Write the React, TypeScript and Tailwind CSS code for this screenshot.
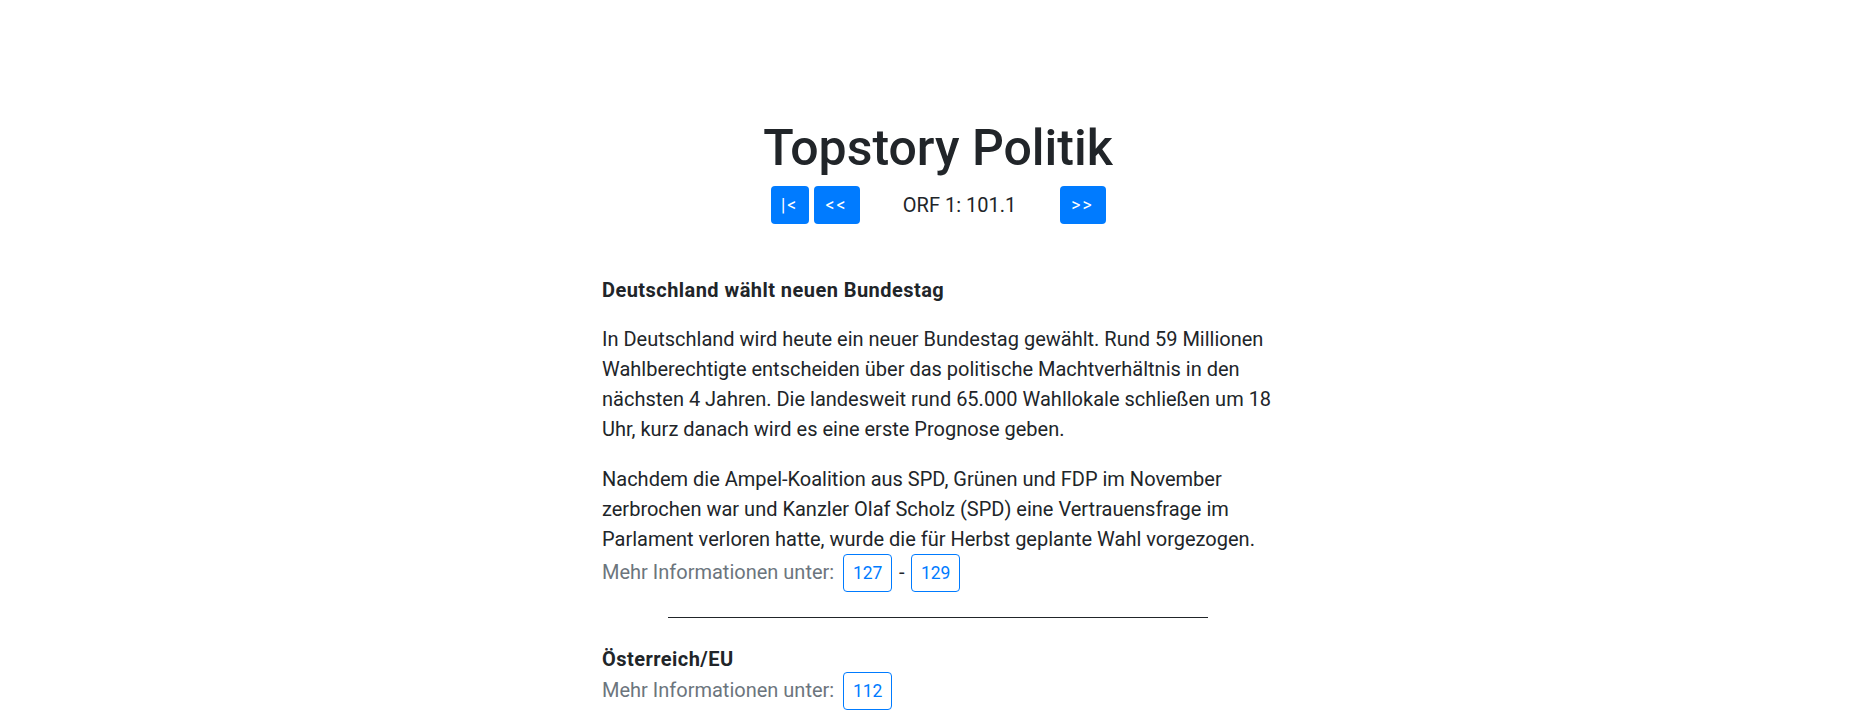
import React from 'react';

const font = { fontFamily: 'Roboto, "Liberation Sans", sans-serif' };

const NavButton: React.FC<{ label: string; width: string }> = ({ label, width }) => (
  <button
    type="button"
    className={`${width} h-[38px] rounded-[4px] bg-[#007bff] text-[17.5px] leading-[26px] tracking-[2px] text-white flex items-center justify-center`}
  >
    {label}
  </button>
);

const PageLink: React.FC<{ page: number }> = ({ page }) => (
  <a
    href="#"
    className="w-[49px] h-[38px] shrink-0 rounded-[4px] border border-[#007bff] text-[17.5px] leading-[26px] text-[#007bff] flex items-center justify-center"
  >
    {page}
  </a>
);

const MoreInfo: React.FC<{ pages: number[]; className?: string }> = ({ pages, className = '' }) => (
  <div className={`flex items-baseline ${className}`}>
    <span className="text-[#6c757d] mr-[9px]">Mehr Informationen unter:</span>
    <PageLink page={pages[0]} />
    {pages.length > 1 && (
      <>
        <span className="w-[19px] text-center">-</span>
        <PageLink page={pages[1]} />
      </>
    )}
  </div>
);

export default function App() {
  return (
    <div className="h-screen overflow-hidden bg-white text-[#212529]" style={font}>
      <main className="w-[672px] mx-auto pt-[118px] text-[20px] leading-[30px]">
        <h1 className="text-center text-[50px] leading-[60px] font-medium">Topstory Politik</h1>

        {/* Teletext page navigation */}
        <div className="mt-[8px] flex justify-center gap-[5px]">
          <NavButton label="|<" width="w-[38px]" />
          <NavButton label="<<" width="w-[46px]" />
          <span className="w-[190px] flex items-center justify-center">ORF 1: 101.1</span>
          <NavButton label=">>" width="w-[46px]" />
        </div>

        <article className="mt-[51px]">
          <h2 className="font-bold tracking-[0.45px]">Deutschland wählt neuen Bundestag</h2>
          <p className="mt-[19px]">
            In Deutschland wird heute ein neuer Bundestag gewählt. Rund 59 Millionen Wahlberechtigte entscheiden
            über das politische Machtverhältnis in den nächsten 4 Jahren. Die landesweit rund 65.000 Wahllokale
            schließen um 18 Uhr, kurz danach wird es eine erste Prognose geben.
          </p>
          <p className="mt-[20px]">
            Nachdem die Ampel-Koalition aus SPD, Grünen und FDP im November zerbrochen war und Kanzler Olaf Scholz
            (SPD) eine Vertrauensfrage im Parlament verloren hatte, wurde die für Herbst geplante Wahl vorgezogen.
          </p>
          <MoreInfo pages={[127, 129]} />
        </article>

        <hr className="w-[540px] mx-auto mt-[25px] border-0 border-t border-[#212529]" />

        <article className="mt-[26px]">
          <h2 className="font-bold tracking-[0.45px]">Österreich/EU</h2>
          <MoreInfo pages={[112]} className="-mt-[2px]" />
        </article>
      </main>
    </div>
  );
}
